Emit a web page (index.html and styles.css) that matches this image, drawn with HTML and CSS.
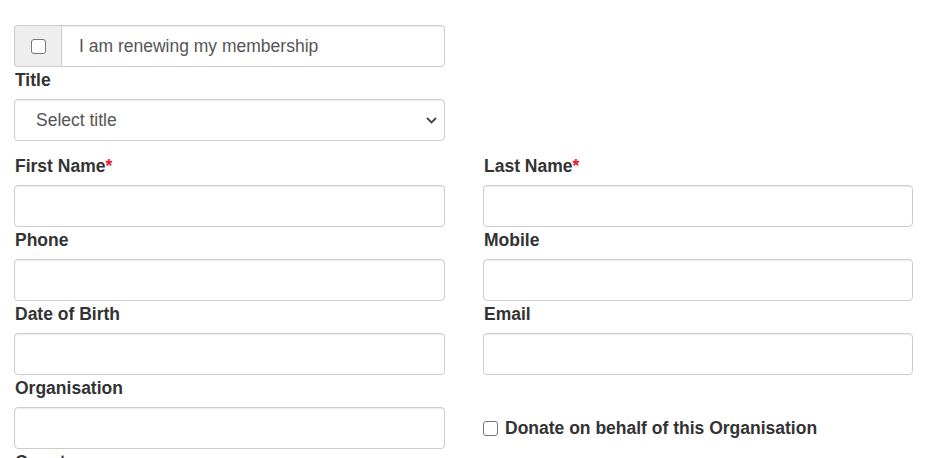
FILE: index.html
```html
<!DOCTYPE html>
<html lang="en">
<head>
<meta charset="utf-8">
<title>Membership form</title>
<link rel="stylesheet" href="styles.css">
</head>
<body>
<form class="form">
  <div class="top">
    <div class="input-group">
      <span class="addon"><input type="checkbox" class="check"></span>
      <span class="group-text">I am renewing my membership</span>
    </div>
    <label class="label">Title</label>
    <select class="control select">
      <option>Select title</option>
    </select>
  </div>
  <div class="grid">
    <div class="field">
      <label class="label">First Name<span class="req">*</span></label>
      <input class="control" type="text">
    </div>
    <div class="field">
      <label class="label">Last Name<span class="req">*</span></label>
      <input class="control" type="text">
    </div>
    <div class="field">
      <label class="label">Phone</label>
      <input class="control" type="text">
    </div>
    <div class="field">
      <label class="label">Mobile</label>
      <input class="control" type="text">
    </div>
    <div class="field">
      <label class="label">Date of Birth</label>
      <input class="control" type="text">
    </div>
    <div class="field">
      <label class="label">Email</label>
      <input class="control" type="text">
    </div>
    <div class="field">
      <label class="label">Organisation</label>
      <input class="control" type="text">
    </div>
    <div class="field">
      <div class="label-space"></div>
      <label class="check-row"><input type="checkbox" class="check"> Donate on behalf of this Organisation</label>
    </div>
    <div class="field">
      <label class="label">Country</label>
      <input class="control" type="text">
    </div>
  </div>
</form>
</body>
</html>
```
FILE: styles.css
```css
html, body {
  margin: 0;
  padding: 0;
  background: #fff;
}
body {
  font-family: "Liberation Sans", Arial, sans-serif;
  font-size: 17.5px;
  color: #333;
  overflow: hidden;
}
.form {
  padding: 25px 0 0 14px;
}
.top {
  width: 431px;
}
.input-group {
  display: flex;
  height: 42px;
  box-sizing: border-box;
}
.addon {
  width: 47px;
  box-sizing: border-box;
  border: 1px solid #ccc;
  border-right: 0;
  border-radius: 4px 0 0 4px;
  background: #eee;
  display: flex;
  align-items: center;
  justify-content: center;
  padding-left: 1px;
}
.group-text {
  flex: 1;
  box-sizing: border-box;
  border: 1px solid #ccc;
  border-radius: 0 4px 4px 0;
  padding: 0 17px;
  display: flex;
  align-items: center;
  color: #555;
  font-size: 17.5px;
  box-shadow: inset 0 1px 1px rgba(0,0,0,.075);
}
.check {
  -webkit-appearance: none;
  appearance: none;
  width: 15px;
  height: 15px;
  margin: 0;
  box-sizing: border-box;
  border: 1px solid #767676;
  border-radius: 3px;
  background: #fff;
  flex: none;
}
.label {
  display: block;
  font-weight: bold;
  line-height: 24px;
  margin: 1px 0 7px;
  padding-left: 1px;
  color: #333;
}
.label-space {
  height: 32px;
}
.req {
  color: #f0142d;
}
.control {
  display: block;
  width: 100%;
  height: 42px;
  box-sizing: border-box;
  border: 1px solid #ccc;
  border-radius: 4px;
  padding: 0 16px;
  font-family: inherit;
  font-size: 17.5px;
  color: #555;
  background: #fff;
  box-shadow: inset 0 1px 1px rgba(0,0,0,.075);
  margin: 0;
}
.select {
  -webkit-appearance: none;
  appearance: none;
  padding-left: 21px;
  padding-right: 30px;
  background-image: url("data:image/svg+xml,%3Csvg xmlns='http://www.w3.org/2000/svg' width='11' height='7' viewBox='0 0 11 7'%3E%3Cpath d='M1 1l4.5 4.5L10 1' fill='none' stroke='%23444' stroke-width='1.8'/%3E%3C/svg%3E");
  background-repeat: no-repeat;
  background-position: right 7px center;
  background-size: 11px 7px;
}
.grid {
  display: grid;
  grid-template-columns: 431px 430px;
  column-gap: 38px;
  margin-top: 12px;
}
.check-row {
  height: 42px;
  display: flex;
  align-items: center;
  gap: 7px;
  font-weight: bold;
  color: #333;
  padding-top: 1px;
  box-sizing: border-box;
}
```
